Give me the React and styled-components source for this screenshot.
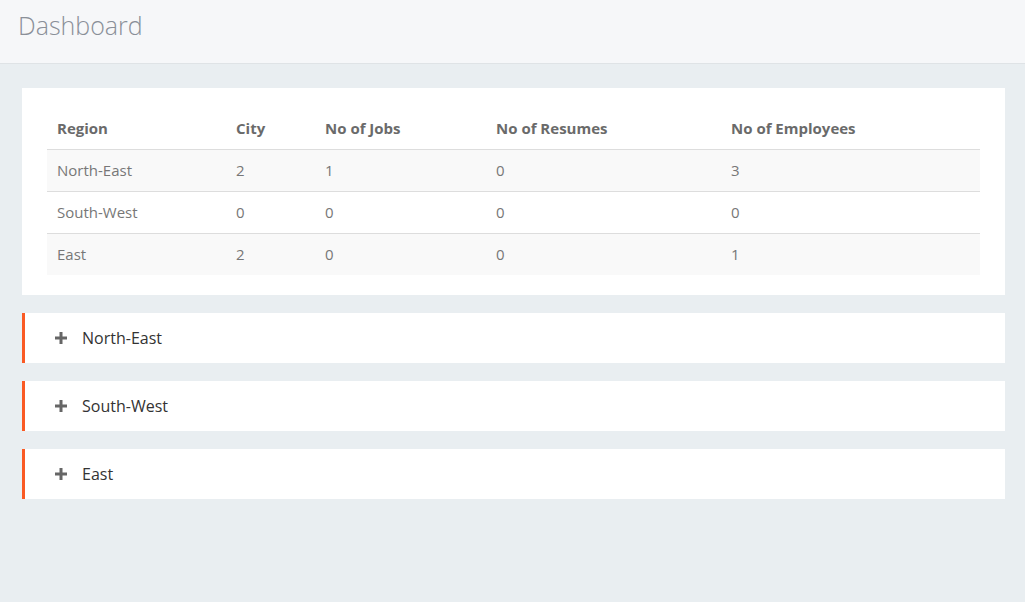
import React from 'react';
import styled, { createGlobalStyle } from 'styled-components';

const GlobalStyle = createGlobalStyle`
    html, body {
        margin: 0;
        padding: 0;
        background: #e9eef1;
        font-family: "Open Sans", "Liberation Sans", sans-serif;
    }
`;

const Page = styled.div`
    min-height: 602px;
    background: #e9eef1;
`;

const Header = styled.header`
    height: 63px;
    background: #f6f7f9;
    border-bottom: 1px solid #dfe3e6;
    display: flex;
    align-items: center;
    padding: 0 18px;
`;

const Title = styled.h1`
    margin: 0 0 14px 0;
    font-size: 25px;
    font-weight: 300;
    color: #8a8f98;
`;

const Content = styled.main`
    padding: 24px 20px 0 22px;
    display: flex;
    flex-direction: column;
    gap: 18px;
`;

const Card = styled.section`
    background: #fff;
    padding: 20px 25px 20px 25px;
`;

const Table = styled.table`
    width: 100%;
    table-layout: fixed;
    border-collapse: collapse;
    font-size: 15px;
`;

const Th = styled.th`
    box-sizing: border-box;
    text-align: left;
    font-weight: 700;
    color: #6a6a6a;
    height: 41px;
    padding: 0 10px;
    border-bottom: 1px solid #dddddd;
    width: ${p => (p.$w ? `${p.$w}px` : 'auto')};
`;

const Row = styled.tr`
    background: ${p => (p.$striped ? '#f9f9f9' : '#fff')};
    border-bottom: ${p => (p.$last ? 'none' : '1px solid #dddddd')};
`;

const Td = styled.td`
    color: #777;
    height: 41px;
    padding: 0 10px;
`;

const Panel = styled.div`
    background: #fff;
    border-left: 3px solid #fa5a24;
    height: 50px;
    display: flex;
    align-items: center;
    padding-left: 30px;
    gap: 15px;
`;

const PlusIcon = styled.svg`
    width: 12px;
    height: 12px;
    fill: #666;
`;

const PanelTitle = styled.span`
    font-size: 16px;
    color: #333;
`;

const columns = [
    { label: 'Region', w: 179 },
    { label: 'City', w: 89 },
    { label: 'No of Jobs', w: 171 },
    { label: 'No of Resumes', w: 235 },
    { label: 'No of Employees' },
];

const rows = [
    ['North-East', 2, 1, 0, 3],
    ['South-West', 0, 0, 0, 0],
    ['East', 2, 0, 0, 1],
];

function Plus() {
    return (
        <PlusIcon viewBox="0 0 12 12">
            <rect x="4.5" y="0" width="3" height="12" />
            <rect x="0" y="4.5" width="12" height="3" />
        </PlusIcon>
    );
}

export default function App() {
    return (
        <>
            <GlobalStyle />
            <Page>
                <Header>
                    <Title>Dashboard</Title>
                </Header>
                <Content>
                    <Card>
                        <Table>
                            <thead>
                                <tr>
                                    {columns.map(c => (
                                        <Th key={c.label} $w={c.w}>{c.label}</Th>
                                    ))}
                                </tr>
                            </thead>
                            <tbody>
                                {rows.map((r, i) => (
                                    <Row key={r[0]} $striped={i % 2 === 0} $last={i === rows.length - 1}>
                                        {r.map((v, j) => <Td key={j}>{v}</Td>)}
                                    </Row>
                                ))}
                            </tbody>
                        </Table>
                    </Card>
                    {rows.map(r => (
                        <Panel key={r[0]}>
                            <Plus />
                            <PanelTitle>{r[0]}</PanelTitle>
                        </Panel>
                    ))}
                </Content>
            </Page>
        </>
    );
}
